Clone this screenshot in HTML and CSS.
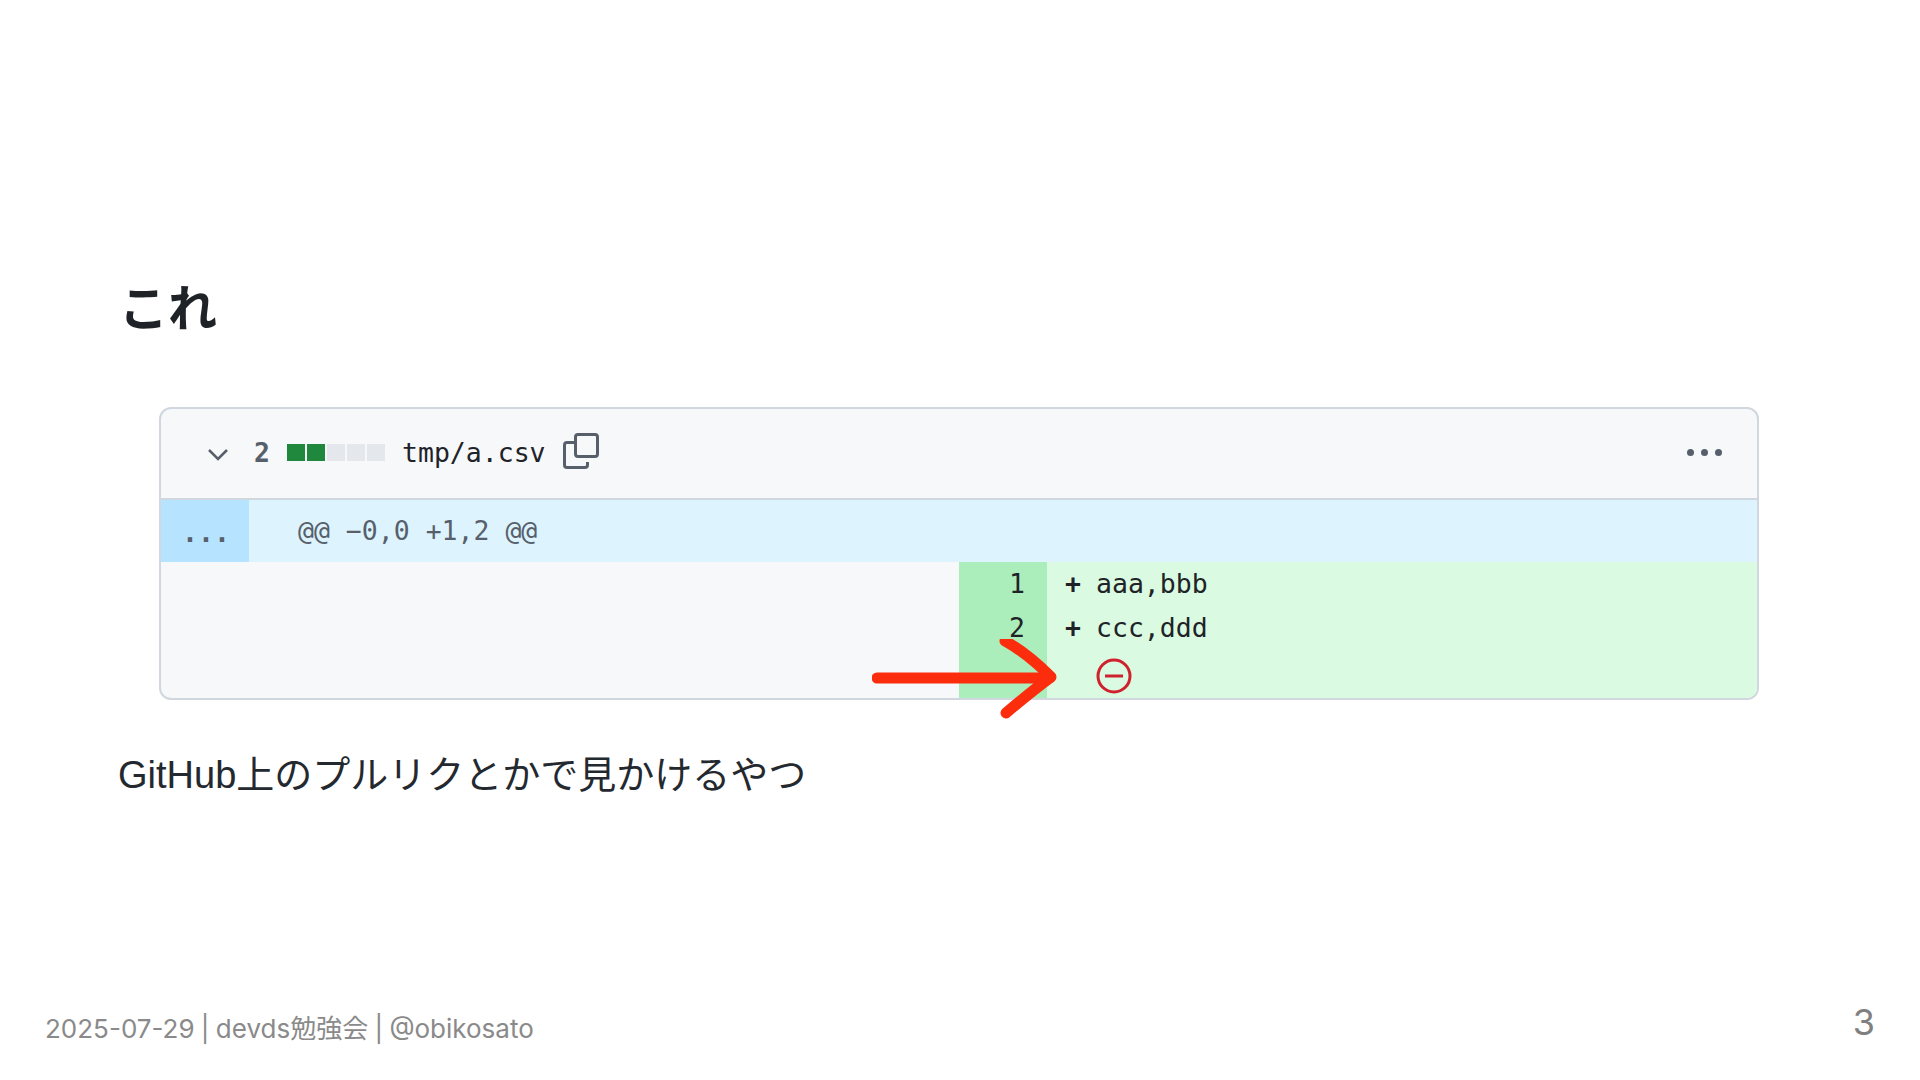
FILE: index.html
```html
<!DOCTYPE html>
<html lang="ja">
<head>
<meta charset="utf-8">
<title>これ</title>
<link rel="stylesheet" href="styles.css">
</head>
<body>
<main class="slide">
  <h1 class="title">これ</h1>
  <div class="shot">
    <div class="card">
      <div class="file-head">
        <svg class="chev" viewBox="0 0 24 24"><path d="M3 8l9 9 9-9"/></svg>
        <span class="count">2</span>
        <span class="bars"><i class="add"></i><i class="add"></i><i></i><i></i><i></i></span>
        <span class="path">tmp/a.csv</span>
        <svg class="copy" viewBox="0 0 36 36"><path d="M12 9.500H4a2.500 2.500 0 0 0-2.500 2.500v20A2.500 2.500 0 0 0 4 34.500h18a2.500 2.500 0 0 0 2.500-2.500v-3"/><rect x="12.500" y="1.500" width="22" height="22" rx="2.500"/></svg>
        <span class="kebab"><i></i><i></i><i></i></span>
      </div>
      <div class="hunk">
        <div class="hunk-gutter">...</div>
        <div class="hunk-text">@@ −0,0 +1,2 @@</div>
      </div>
      <div class="diff">
        <div class="left"></div>
        <div class="nums"><span>1</span><span>2</span></div>
        <div class="code">
          <div class="line"><b>+</b>aaa,bbb</div>
          <div class="line"><b>+</b>ccc,ddd</div>
          <svg class="noentry" viewBox="0 0 36 36"><circle cx="18" cy="18" r="16"/><path d="M9 18h18"/></svg>
        </div>
      </div>
    </div>
    <svg class="arrow" viewBox="0 0 200 90"><path d="M5 39H174"/><path d="M133 2Q155 14 179 38Q160 52 134 74"/></svg>
  </div>
  <p class="body-text">GitHub上のプルリクとかで見かけるやつ</p>
  <footer class="foot">
    <span class="foot-text">2025-07-29 | devds勉強会 | @obikosato</span>
    <span class="page">3</span>
  </footer>
</main>
</body>
</html>
```

FILE: styles.css
```css
* { box-sizing: border-box; }
html, body { margin: 0; padding: 0; background: #fff; }
.slide {
  width: 1920px;
  height: 1080px;
  background: #fff;
  color: #24292f;
  display: flex;
  flex-direction: column;
  overflow: hidden;
}
.title {
  margin: 273px 0 0 119px;
  font: 700 49px/64px "Noto Sans CJK JP", sans-serif;
  color: #1f2328;
}
.shot {
  position: relative;
  margin: 70px 0 0 159px;
  width: 1600px;
  height: 293px;
}
.card {
  width: 100%;
  height: 100%;
  border: 2px solid #d0d7de;
  border-radius: 12px;
  background: #f6f8fa;
  overflow: hidden;
  display: flex;
  flex-direction: column;
}
.file-head {
  height: 91px;
  flex: none;
  border-bottom: 2px solid #d0d7de;
  display: flex;
  align-items: center;
  padding: 0 35px 2px 45px;
  font-family: "DejaVu Sans Mono", monospace;
  font-size: 26.500px;
}
.chev {
  width: 24px;
  height: 24px;
  margin-top: 2px;
  fill: none;
  stroke: #57606a;
  stroke-width: 2.500;
}
.count { margin-left: 24px; font-weight: 700; color: #57606a; }
.bars { display: flex; gap: 2px; margin-left: 17px; }
.bars i { width: 18px; height: 17px; background: #e4e7eb; }
.bars i.add { background: #1f883d; }
.path { margin-left: 17px; color: #1f2328; }
.copy {
  width: 36px;
  height: 36px;
  margin: -3px 0 0 17px;
  fill: none;
  stroke: #57606a;
  stroke-width: 3;
}
.kebab { margin-left: auto; display: flex; gap: 7px; }
.kebab i { width: 7px; height: 7px; border-radius: 50%; background: #57606a; }
.hunk {
  height: 62px;
  flex: none;
  display: flex;
  background: #ddf4ff;
  font-family: "DejaVu Sans Mono", monospace;
  font-size: 26.500px;
  color: #57606a;
}
.hunk-gutter {
  width: 88px;
  padding: 3px 0 0 2px;
  background: #b6e3ff;
  display: flex;
  align-items: center;
  justify-content: center;
  font-weight: 700;
}
.hunk-text { margin-left: 49px; padding-bottom: 2px; align-self: center; }
.diff { flex: 1; display: flex; min-height: 0; }
.left { width: 798px; flex: none; }
.nums {
  width: 88px;
  flex: none;
  background: #aceebb;
  display: flex;
  flex-direction: column;
  align-items: flex-end;
  padding-right: 22px;
  font: 26.500px/44px "DejaVu Sans Mono", monospace;
  color: #1f2328;
}
.code {
  flex: 1;
  background: #dafbe1;
  padding-left: 18px;
  font: 26.500px/44px "DejaVu Sans Mono", monospace;
  color: #1f2328;
}
.line b { font-weight: 700; margin-right: 15px; }
.noentry {
  display: block;
  width: 36px;
  height: 36px;
  margin: 8px 0 0 31px;
  fill: none;
  stroke: #cf222e;
  stroke-width: 3;
}
.arrow {
  position: absolute;
  left: 713px;
  top: 232px;
  width: 200px;
  height: 90px;
  fill: none;
  stroke: #fb2d0d;
  stroke-width: 11;
  stroke-linecap: round;
  stroke-linejoin: round;
}
.body-text {
  margin: 47px 0 0 118px;
  font: 38px/56px "Liberation Sans", "Noto Sans CJK JP", sans-serif;
  color: #24292f;
}
.foot {
  margin-top: auto;
  padding: 0 45px 31px 45px;
  display: flex;
  justify-content: space-between;
  align-items: flex-end;
  color: #8a8a8a;
}
.foot-text { font: 26px/40px Inter, "Noto Sans CJK JP", sans-serif; word-spacing: -1px; }
.page { font: 36px/48px Inter, sans-serif; margin-bottom: 3px; color: #808080; }
```
